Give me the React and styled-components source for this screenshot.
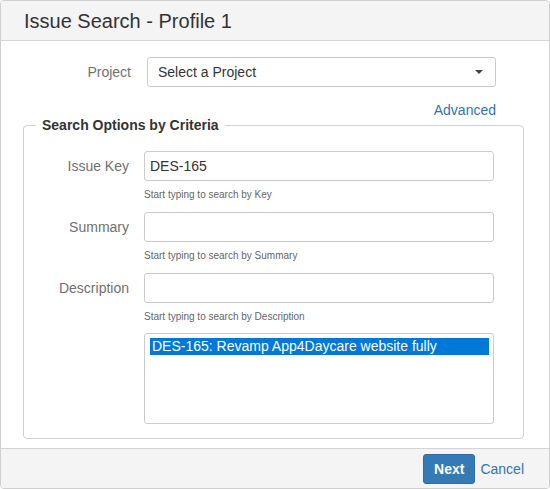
import React from 'react';
import styled, { createGlobalStyle } from 'styled-components';

const GlobalStyle = createGlobalStyle`
  html, body {
    margin: 0;
    padding: 0;
    background: #fff;
  }
  * {
    box-sizing: border-box;
  }
`;

const searchFields = [
  { label: 'Issue Key', value: 'DES-165', help: 'Start typing to search by Key' },
  { label: 'Summary', value: '', help: 'Start typing to search by Summary' },
  { label: 'Description', value: '', help: 'Start typing to search by Description' },
];

const results = ['DES-165: Revamp App4Daycare website fully'];

const App = () => {
  return (
    <>
      <GlobalStyle />
      <Dialog>
        <Header>
          <Title>Issue Search - Profile 1</Title>
        </Header>
        <Body>
          <ProjectRow>
            <Label>Project</Label>
            <SelectBox>
              <span>Select a Project</span>
              <Caret viewBox="0 0 8 4" width="8" height="4">
                <path d="M0 0 L8 0 L4 4 Z" fill="#444" />
              </Caret>
            </SelectBox>
          </ProjectRow>
          <AdvancedRow>
            <Link href="#">Advanced</Link>
          </AdvancedRow>
          <Criteria>
            <Legend>Search Options by Criteria</Legend>
            {searchFields.map((field) => (
              <FieldRow key={field.label}>
                <Label>{field.label}</Label>
                <div>
                  <TextInput type="text" defaultValue={field.value} />
                  <Help>{field.help}</Help>
                </div>
              </FieldRow>
            ))}
            <FieldRow>
              <span />
              <ListBox role="listbox">
                {results.map((item, i) => (
                  <Option key={item} selected={i === 0}>
                    {item}
                  </Option>
                ))}
              </ListBox>
            </FieldRow>
          </Criteria>
        </Body>
        <Footer>
          <PrimaryButton>Next</PrimaryButton>
          <LinkButton>Cancel</LinkButton>
        </Footer>
      </Dialog>
    </>
  );
};

export default App;

const Dialog = styled.div`
  width: 550px;
  height: 489px;
  display: flex;
  flex-direction: column;
  border: 1px solid #cfcfcf;
  border-radius: 4px;
  overflow: hidden;
  font-family: "Liberation Sans", Arial, sans-serif;
  color: #333;
  background: #fff;
`;

const Header = styled.div`
  height: 40px;
  flex: none;
  display: flex;
  align-items: center;
  padding-left: 23px;
  background: #f4f4f4;
  border-bottom: 1px solid #d4d4d4;
`;

const Title = styled.h1`
  margin: 0;
  font-size: 20px;
  font-weight: normal;
  line-height: 40px;
  color: #333;
`;

const Body = styled.div`
  flex: 1;
  padding: 16px 25px 0 22px;
`;

const ProjectRow = styled.div`
  display: grid;
  grid-template-columns: 108px 349px;
  column-gap: 16px;
  align-items: center;
`;

const Label = styled.label`
  text-align: right;
  font-size: 14px;
  line-height: 30px;
  color: #707070;
`;

const SelectBox = styled.div`
  height: 30px;
  display: flex;
  align-items: center;
  justify-content: space-between;
  padding: 0 10px;
  border: 1px solid #ccc;
  border-radius: 3px;
  font-size: 14px;
  color: #333;
  background: #fff;
`;

const Caret = styled.svg`
  display: block;
  margin-right: 2px;
`;

const AdvancedRow = styled.div`
  margin-top: 13px;
  padding-right: 28px;
  text-align: right;
  line-height: 20px;
`;

const Link = styled.a`
  font-size: 14px;
  color: #3572b0;
  text-decoration: none;
`;

const Criteria = styled.fieldset`
  margin: 0;
  padding: 0 30px 14px 12px;
  border: 1px solid #d0d0d0;
  border-radius: 4px;
  min-width: 0;

  & > div:first-of-type {
    margin-top: 21px;
  }
`;

const Legend = styled.legend`
  padding: 0 6px;
  font-size: 14px;
  font-weight: bold;
  line-height: 10px;
  color: #333;
`;

const FieldRow = styled.div`
  display: grid;
  grid-template-columns: 93px 350px;
  column-gap: 15px;
  align-items: start;
`;

const TextInput = styled.input`
  display: block;
  width: 100%;
  height: 30px;
  margin: 0;
  padding: 0 5px;
  border: 1px solid #ccc;
  border-radius: 3px;
  font-family: inherit;
  font-size: 14px;
  color: #333;
  outline: none;
`;

const Help = styled.div`
  margin: 7px 0 10px;
  font-size: 10px;
  line-height: 14px;
  color: #666;
`;

const ListBox = styled.div`
  height: 91px;
  margin-top: -1px;
  padding: 4px 4px 4px 5px;
  border: 1px solid #ccc;
  border-radius: 3px;
  background: #fff;
`;

const Option = styled.div`
  height: 17px;
  padding-left: 2px;
  font-size: 14px;
  line-height: 17px;
  white-space: nowrap;
  color: ${(p) => (p.selected ? '#fff' : '#333')};
  background: ${(p) => (p.selected ? '#0078d7' : 'transparent')};
`;

const Footer = styled.div`
  height: 40px;
  flex: none;
  display: flex;
  align-items: center;
  justify-content: flex-end;
  gap: 5px;
  padding-right: 25px;
  background: #f4f4f4;
  border-top: 1px solid #d4d4d4;
`;

const PrimaryButton = styled.button`
  height: 30px;
  padding: 0 10px;
  border: 1px solid #2e6da4;
  border-radius: 3px;
  background: #337ab7;
  color: #fff;
  font-family: inherit;
  font-size: 14px;
  font-weight: bold;
  cursor: pointer;
`;

const LinkButton = styled.button`
  padding: 0;
  border: none;
  background: none;
  color: #3572b0;
  font-family: inherit;
  font-size: 14px;
  margin-top: 1px;
  cursor: pointer;
`;
